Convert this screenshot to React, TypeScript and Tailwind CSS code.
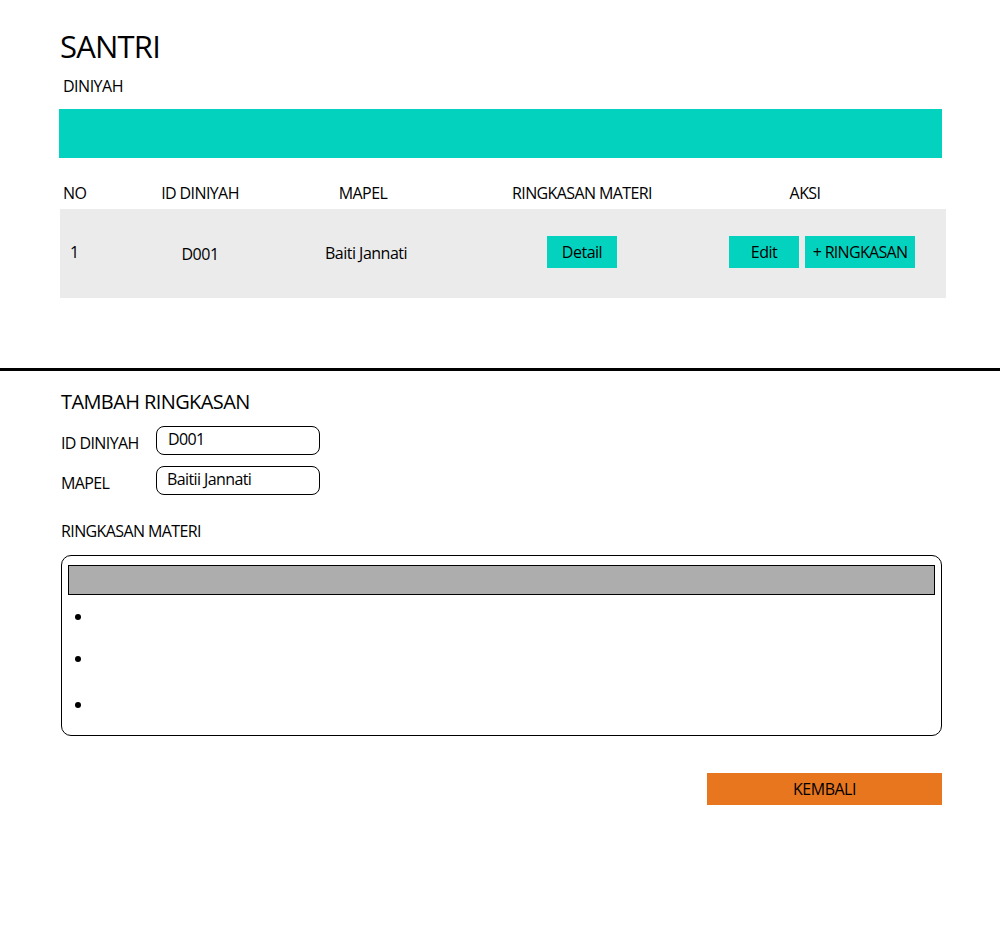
import React from "react";

const font = { fontFamily: '"Open Sans", "Noto Sans", sans-serif' };

export default function App() {
  return (
    <div className="w-[1000px] h-[946px] bg-white text-black" style={font}>
      <div className="pl-[59px] pr-[58px] pt-[26px]">
        <h1 className="text-[31px] leading-[40px] tracking-[-0.8px] pl-[1px]">SANTRI</h1>
        <div className="text-[16px] leading-[20px] tracking-[-0.5px] pl-[4px] mt-[10px]">DINIYAH</div>
        <div className="h-[49px] bg-[#03d3be] mt-[13px]" />
        <div className="w-[886px] ml-[1px] mt-[21px]">
          <div className="grid grid-cols-[80px_120px_206px_232px_1fr] h-[30px] items-center text-[16px] tracking-[-0.6px] pb-[2px]">
            <div className="pl-[3px]">NO</div>
            <div className="text-center">ID DINIYAH</div>
            <div className="text-center">MAPEL</div>
            <div className="text-center">RINGKASAN MATERI</div>
            <div className="text-center pr-[34px]">AKSI</div>
          </div>
          <div className="grid grid-cols-[80px_120px_206px_232px_1fr] h-[89px] items-center bg-[#ebebeb] text-[16px] tracking-[-0.5px]">
            <div className="pl-[10px] -mt-[3px]">1</div>
            <div className="text-center mt-[1px]">D001</div>
            <div className="text-center pl-[6px] -mt-[1px]">Baiti Jannati</div>
            <div className="flex justify-center -mt-[4px]">
              <div className="w-[70px] h-[32px] bg-[#03d3be] flex items-center justify-center text-[16px]">Detail</div>
            </div>
            <div className="flex gap-[6px] pl-[31px] -mt-[4px]">
              <div className="w-[70px] h-[32px] bg-[#03d3be] flex items-center justify-center text-[16px]">Edit</div>
              <div className="w-[110px] h-[32px] bg-[#03d3be] flex items-center justify-center text-[16px] tracking-[-0.7px]">+ RINGKASAN</div>
            </div>
          </div>
        </div>
      </div>
      <div className="h-[3px] bg-black mt-[70px]" />
      <div className="pl-[61px] pr-[58px]">
        <h2 className="text-[20px] leading-[26px] tracking-[-0.6px] mt-[18px]">TAMBAH RINGKASAN</h2>
        <div className="flex items-center mt-[11px] text-[16px] tracking-[-0.6px]">
          <div className="w-[95px] pt-[5px]">ID DINIYAH</div>
          <div className="w-[164px] h-[29px] border border-black rounded-[8px] pl-[11px] flex items-center pb-[3px]">D001</div>
        </div>
        <div className="flex items-center mt-[11px] text-[16px] tracking-[-0.6px]">
          <div className="w-[95px] pt-[5px]">MAPEL</div>
          <div className="w-[164px] h-[29px] border border-black rounded-[8px] pl-[10px] flex items-center pb-[3px]">Baitii Jannati</div>
        </div>
        <div className="text-[16px] tracking-[-0.6px] mt-[26px] leading-[20px]">RINGKASAN MATERI</div>
        <div className="w-[881px] h-[181px] border border-black rounded-[10px] mt-[14px] px-[6px] pt-[9px]">
          <div className="h-[30px] bg-[#adadad] border border-black" />
          <ul className="pl-[7px]">
            <li className="mt-[19px] h-[6px] w-[6px] rounded-full bg-black" />
            <li className="mt-[36px] h-[6px] w-[6px] rounded-full bg-black" />
            <li className="mt-[40px] h-[6px] w-[6px] rounded-full bg-black" />
          </ul>
        </div>
        <div className="flex justify-end w-[881px] mt-[37px]">
          <div className="w-[235px] h-[32px] bg-[#e8761f] flex items-center justify-center text-[16px] tracking-[-0.5px]">KEMBALI</div>
        </div>
      </div>
    </div>
  );
}
